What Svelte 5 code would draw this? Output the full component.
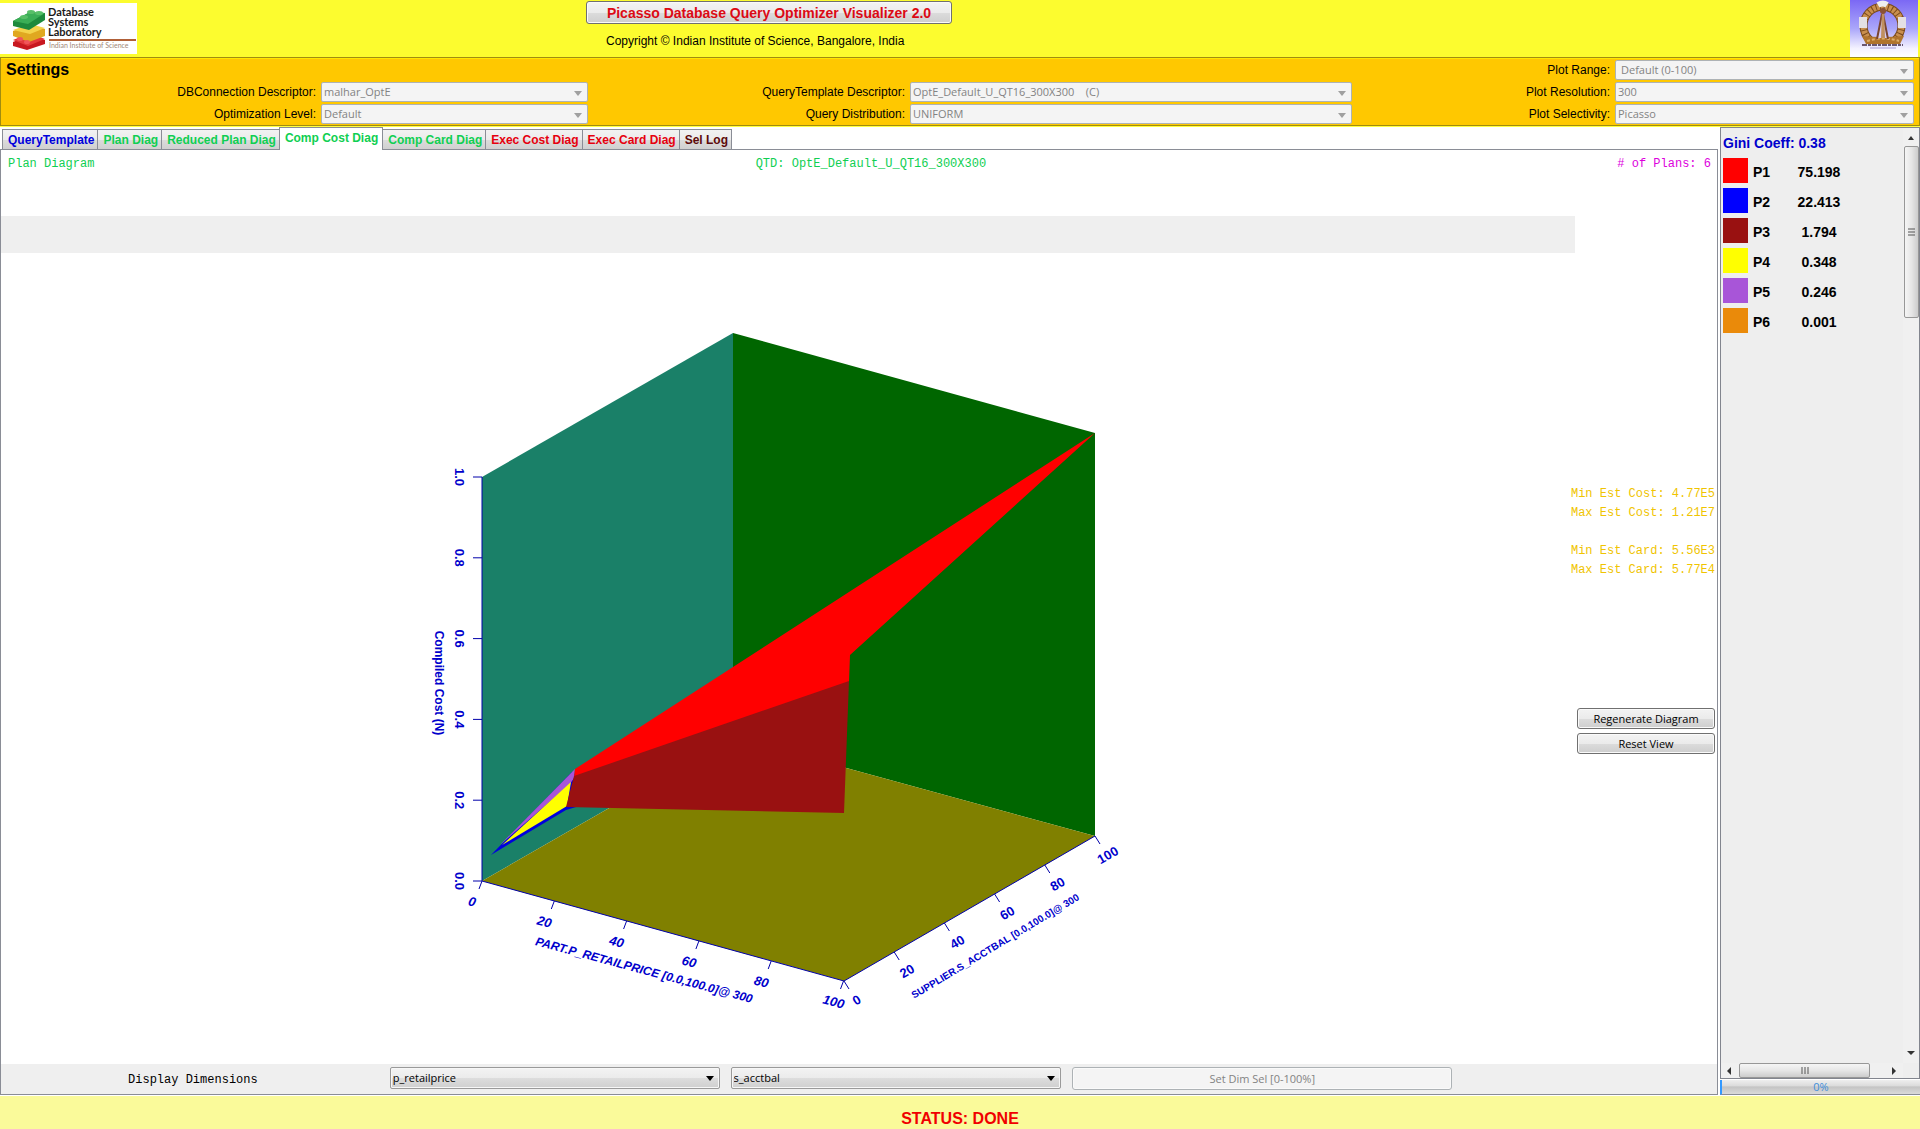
<script lang="ts">
	let dimX = 'p_retailprice';
	let dimY = 's_acctbal';
	let activeTab = 'Comp Cost Diag';

	const tabs = [
		{ name: 'QueryTemplate', color: '#0000dd' },
		{ name: 'Plan Diag', color: '#10cf52' },
		{ name: 'Reduced Plan Diag', color: '#10cf52' },
		{ name: 'Comp Cost Diag', color: '#10cf52' },
		{ name: 'Comp Card Diag', color: '#10cf52' },
		{ name: 'Exec Cost Diag', color: '#e6000e' },
		{ name: 'Exec Card Diag', color: '#e6000e' },
		{ name: 'Sel Log', color: '#5c0a0a' }
	];

	// listed row by row, three fields to a row
	const settings = [
		{ id: 'connection', label: 'DBConnection Descriptor:', value: 'malhar_OptE' },
		{
			id: 'template',
			label: 'QueryTemplate Descriptor:',
			value: 'OptE_Default_U_QT16_300X300\u00a0\u00a0\u00a0\u00a0(C)'
		},
		{ id: 'resolution', label: 'Plot Resolution:', value: '300' },
		{ id: 'level', label: 'Optimization Level:', value: 'Default' },
		{ id: 'distribution', label: 'Query Distribution:', value: 'UNIFORM' },
		{ id: 'selectivity', label: 'Plot Selectivity:', value: 'Picasso' }
	];

	const plans = [
		{ name: 'P1', share: '75.198', color: '#ff0000' },
		{ name: 'P2', share: '22.413', color: '#0000ff' },
		{ name: 'P3', share: '1.794', color: '#991111' },
		{ name: 'P4', share: '0.348', color: '#ffff00' },
		{ name: 'P5', share: '0.246', color: '#a855d8' },
		{ name: 'P6', share: '0.001', color: '#ea8a0a' }
	];

	const steps = [0, 1, 2, 3, 4, 5];

	const costTicks = steps.map((i) => ({ text: (i / 5).toFixed(1), x: 482, y: 881 - i * 80.8 }));
	const priceTicks = steps.map((i) => ({ text: String(i * 20), x: 482 + i * 72.3, y: 881 + i * 20 }));
	const acctTicks = steps.map((i) => ({ text: String(i * 20), x: 844 + i * 50.2, y: 981 - i * 29 }));
</script>

{#snippet arrow()}
	<svg class="arrow" width="8" height="5" viewBox="0 0 8 5" aria-hidden="true">
		<path d="M0 0h8L4 5z" fill="currentColor" />
	</svg>
{/snippet}

<div class="page">
	<header class="banner">
		<svg class="lab-logo" width="137" height="51" viewBox="0 3 137 51">
			<rect y="3" width="137" height="51" fill="#fff" />
			<path d="M13 42l17-7 15 5v4L27 50 13 46z" fill="#c81820" />
			<path d="M13 40l17-7 15 6-17 7z" fill="#e43a3c" />
			<path d="M13 31l17-6 15 4v7l-16 6-16-6z" fill="#e0a820" />
			<path d="M13 30l17-6 15 4-15 6z" fill="#f4d34a" />
			<path d="M13 21l17-9 15 1v7L29 30l-16-4z" fill="#1d8a3c" />
			<path d="M13 21l17-9 15 1-17 11z" fill="#3aae56" />
			<g fill="#58bf68">
				<ellipse cx="31" cy="12" rx="4" ry="2" />
				<ellipse cx="39" cy="13" rx="4" ry="2" />
				<ellipse cx="24" cy="17" rx="4" ry="2" />
			</g>
			<g fill="#f0555a">
				<ellipse cx="20" cy="39" rx="3" ry="2" />
				<ellipse cx="27" cy="42" rx="3" ry="2" />
			</g>
			<g font-family="Lato, sans-serif" font-size="11" font-weight="700" fill="#1a1a1a">
				<text x="48" y="16">Database</text>
				<text x="48" y="26">Systems</text>
				<text x="48" y="36">Laboratory</text>
			</g>
			<path d="M49 40h87" stroke="#b06038" stroke-width="2" />
			<text x="49" y="48" font-family="Lato, sans-serif" font-size="7" fill="#a08878">Indian Institute of Science</text>
		</svg>

		<div class="title">
			<button class="button title-button">Picasso Database Query Optimizer Visualizer 2.0</button>
			<p class="copyright">Copyright © Indian Institute of Science, Bangalore, India</p>
		</div>

		<svg class="crest" width="68" height="57" viewBox="0 0 68 57">
			<defs>
				<linearGradient id="sky" x1="0" y1="0" x2="0" y2="1">
					<stop offset="0" stop-color="#7b68f4" />
					<stop offset="0.5" stop-color="#aaa6fa" />
					<stop offset="0.85" stop-color="#f4f2ff" />
					<stop offset="1" stop-color="#fff" />
				</linearGradient>
			</defs>
			<rect width="68" height="57" fill="url(#sky)" />
			<path d="M20 40A19 19 0 1 1 45 40" fill="none" stroke="#7a4a1c" stroke-width="8" />
			<path d="M20 40A19 19 0 1 1 45 40" fill="none" stroke="#c98f4e" stroke-width="6" stroke-dasharray="3 1" />
			<path d="M28 5q5-3 9 0" fill="none" stroke="#eee" stroke-width="6" />
			<path d="M13 17v11M52 17v11" stroke="#e4e0e4" stroke-width="8" />
			<path d="M12 36q20 2 42 0l-4 8H16z" fill="#b0742c" />
			<path d="M17 41q16-5 32 0" fill="none" stroke="#dcae68" stroke-width="2" stroke-dasharray="3 2" />
			<path d="M32 14l-5 24h11l-5-24z" fill="#d8ccf0" />
			<path d="M32 14l-5 25M33 14l5 25" stroke="#7a4630" stroke-width="2" />
			<path d="M32 9h2l1 29h-4z" fill="#c09060" />
			<circle cx="33" cy="11" r="3" fill="#8a5236" />
			<path d="M12 45h41" stroke="#6b5870" stroke-width="2" stroke-dasharray="5 1 3 1" />
			<path d="M20 48h26" stroke="#a59ad8" />
		</svg>
	</header>

	<section class="settings">
		<h1>Settings</h1>
		<label class="range-label" for="range">Plot Range:</label>
		<div class="combo">
			<select id="range" class="indented" disabled><option>Default (0-100)</option></select>
			{@render arrow()}
		</div>
		{#each settings as field}
			<label for={field.id}>{field.label}</label>
			<div class="combo">
				<select id={field.id} disabled><option>{field.value}</option></select>
				{@render arrow()}
			</div>
		{/each}
	</section>

	<main>
		<div class="workspace">
			<div class="tabs" role="tablist">
				{#each tabs as tab}
					<button
						role="tab"
						class="tab"
						class:active={tab.name === activeTab}
						aria-selected={tab.name === activeTab}
						style="color: {tab.color}"
						on:click={() => (activeTab = tab.name)}
					>
						{tab.name}
					</button>
				{/each}
			</div>

			<div class="panel">
				<div class="captions">
					<span>Plan Diagram</span>
					<span class="qtd">QTD: OptE_Default_U_QT16_300X300</span>
					<span class="count"># of Plans: 6</span>
				</div>

				<div class="diagram">
					<div class="plot">
						<div class="strip"></div>
						<svg class="chart" viewBox="1 253 1574 811">
							<polygon points="482,477 733,333 733,737 482,881" fill="#1a8068" />
							<polygon points="733,333 1095,433 1095,836 733,737" fill="#006600" />
							<polygon points="482,881 733,737 1095,836 844,981" fill="#808000" />

							<polygon points="491,855 572,772 576,775 576,807 566,810" fill="#0000dd" />
							<polygon points="500,845 575,769 574,778 570,784" fill="#a855d8" />
							<polygon points="502,845 571,782 567,806" fill="#ffff00" />
							<polygon points="575,769 1095,433 850,655 849,682 574,777" fill="#ff0000" />
							<polygon points="574,776 849,681 844,813 566,807" fill="#991111" />

							<path class="axis" d="M482 477V881L844 981L1095 836" />

							<g class="ticks">
								{#each costTicks as t}
									<path d="M{t.x} {t.y}h-9" />
									<text transform="translate({t.x - 27} {t.y}) rotate(90)">{t.text}</text>
								{/each}
								{#each priceTicks as t}
									<path d="M{t.x} {t.y}l-3 8" />
									<text class="slanted" transform="translate({t.x - 11} {t.y + 25}) rotate(15)">{t.text}</text>
								{/each}
								{#each acctTicks as t}
									<path d="M{t.x} {t.y}l5 8" />
									<text transform="translate({t.x + 15} {t.y + 23}) rotate(-30)">{t.text}</text>
								{/each}
							</g>

							<g class="names">
								<text transform="translate(435 683) rotate(90)">Compiled Cost (N)</text>
								<text class="slanted" transform="translate(643 974) rotate(15)">PART.P_RETAILPRICE [0.0,100.0]@ 300</text>
								<text class="small" transform="translate(997 949) rotate(-31)">SUPPLIER.S_ACCTBAL [0.0,100.0]@ 300</text>
							</g>
						</svg>
					</div>

					<aside class="info">
						<div class="estimates">
							<p>Min Est Cost: 4.77E5</p>
							<p>Max Est Cost: 1.21E7</p>
							<p class="gap-above">Min Est Card: 5.56E3</p>
							<p>Max Est Card: 5.77E4</p>
						</div>
						<button class="button">Regenerate Diagram</button>
						<button class="button">Reset View</button>
					</aside>
				</div>

				<div class="dimensions">
					<span class="dim-title">Display Dimensions</span>
					<div class="combo enabled">
						<select aria-label="First dimension" bind:value={dimX}>
							<option>p_retailprice</option>
						</select>
						{@render arrow()}
					</div>
					<div class="combo enabled">
						<select aria-label="Second dimension" bind:value={dimY}>
							<option>s_acctbal</option>
						</select>
						{@render arrow()}
					</div>
					<button class="button" disabled>Set Dim Sel [0-100%]</button>
				</div>
			</div>
		</div>

		<div class="side">
			<div class="legend">
				<div class="legend-content">
					<h2>Gini Coeff: 0.38</h2>
					<ul>
						{#each plans as plan}
							<li>
								<span class="swatch" style="background: {plan.color}"></span>
								<span class="plan-name">{plan.name}</span>
								<span class="share">{plan.share}</span>
							</li>
						{/each}
					</ul>
				</div>
				<div class="scroll vertical">
					<svg width="6" height="4" viewBox="0 0 6 4"><path d="M0 4h6L3 0z" fill="#333" /></svg>
					<div class="thumb">
						<svg width="7" height="8" viewBox="0 0 7 8"><path d="M0 1h7M0 4h7M0 7h7" stroke="#555" /></svg>
					</div>
					<svg class="last" width="8" height="4" viewBox="0 0 8 4"><path d="M0 0h8L4 4z" fill="#333" /></svg>
				</div>
				<div class="scroll horizontal">
					<svg width="4" height="8" viewBox="0 0 4 8"><path d="M4 0v8L0 4z" fill="#333" /></svg>
					<div class="thumb">
						<svg width="8" height="7" viewBox="0 0 8 7"><path d="M1 0v7M4 0v7M7 0v7" stroke="#555" /></svg>
					</div>
					<svg class="last" width="4" height="8" viewBox="0 0 4 8"><path d="M0 0v8L4 4z" fill="#333" /></svg>
				</div>
			</div>
			<div class="progress" role="progressbar" aria-label="Progress" aria-valuenow="0">0%</div>
		</div>
	</main>

	<footer>STATUS: DONE</footer>
</div>

<style>
	:global(body) {
		margin: 0;
	}

	.page {
		display: flex;
		flex-direction: column;
		min-height: 100vh;
		font-family: 'Liberation Sans', Arial, sans-serif;
		font-size: 12px;
		color: #000;
		background: #fff;
	}

	h1,
	h2,
	p,
	ul {
		margin: 0;
		padding: 0;
		list-style: none;
	}

	.banner {
		display: grid;
		grid-template-columns: 586fr 366fr 968fr;
		height: 57px;
		background: #fcfc2f;
	}

	.lab-logo {
		display: block;
		margin-top: 3px;
	}

	.title {
		display: flex;
		flex-direction: column;
		padding-top: 1px;
	}

	.copyright {
		padding: 9px 0 0 20px;
		line-height: 16px;
		white-space: nowrap;
	}

	.crest {
		display: block;
		justify-self: end;
		margin-right: 2px;
	}

	.button {
		height: 21px;
		padding: 0;
		border: 1px solid #707070;
		border-radius: 3px;
		background: linear-gradient(#f3f3f3, #ebebeb 50%, #dcdcdc 51%, #cecece);
		box-shadow: inset 0 0 0 1px #fafafa;
		color: #000;
		font-family: 'Open Sans', sans-serif;
		font-size: 11px;
		line-height: 16px;
		white-space: nowrap;
	}

	.button:disabled {
		border-color: #adb2b5;
		background: #f4f4f4;
		color: #838383;
	}

	.title-button {
		height: 23px;
		color: #dc0a14;
		font-family: 'Liberation Sans', Arial, sans-serif;
		font-size: 14px;
		font-weight: bold;
	}

	.settings {
		display: grid;
		grid-template-columns: 315fr 267fr 312fr 442fr 253fr 299fr;
		grid-auto-rows: 20px;
		gap: 2px 5px;
		padding: 2px 5px 1px 0;
		border: 1px solid #a08c10;
		background: #ffc800;
		box-shadow: inset 0 1px #ffe600;
	}

	.settings h1 {
		grid-column: 1 / 5;
		padding-left: 5px;
		font-size: 16px;
		line-height: 20px;
	}

	.settings label {
		line-height: 20px;
		text-align: right;
		white-space: nowrap;
	}

	.combo {
		position: relative;
		min-width: 0;
		color: #a0a0a0;
	}

	.combo select {
		display: block;
		box-sizing: border-box;
		width: 100%;
		height: 20px;
		padding: 0 20px 0 2px;
		border: 1px solid #adb2b5;
		border-radius: 2px;
		background: #f4f4f4;
		color: #838383;
		opacity: 1;
		font-family: 'Open Sans', sans-serif;
		font-size: 11px;
		line-height: 16px;
		appearance: none;
	}

	.combo select.indented {
		padding-left: 5px;
	}

	.arrow {
		position: absolute;
		top: 9px;
		right: 6px;
		pointer-events: none;
	}

	.combo.enabled {
		color: #000;
	}

	.combo.enabled select {
		height: 22px;
		border-color: #9a9a9a;
		background: linear-gradient(#f3f3f3, #ebebeb 50%, #dddddd 51%, #cfcfcf);
		box-shadow: inset 0 0 0 1px #f7f7f7;
		color: #000;
	}

	main {
		display: grid;
		flex: 1;
		grid-template-columns: minmax(0, 1fr) 200px;
		gap: 2px;
		border-top: 1px solid #ffff40;
		border-bottom: 1px solid #fff;
	}

	.workspace {
		display: flex;
		flex-direction: column;
	}

	.tabs {
		display: flex;
		align-items: flex-end;
		height: 22px;
		padding-left: 2px;
	}

	.tab {
		height: 20px;
		padding: 2px 3px 0 5px;
		border: 1px solid #8a8d96;
		border-left-width: 0;
		border-bottom: 0;
		background: linear-gradient(#f2f2f2, #ebebeb 50%, #dcdcdc 51%, #d0d0d0);
		font-family: inherit;
		font-size: 12px;
		font-weight: bold;
		line-height: 17px;
		white-space: nowrap;
	}

	.tab:first-child {
		border-left-width: 1px;
	}

	.tab.active {
		z-index: 1;
		height: 23px;
		margin: 0 0 -1px -1px;
		padding: 0 4px 2px 5px;
		border-left-width: 1px;
		background: #fff;
	}

	.panel {
		display: flex;
		flex: 1;
		flex-direction: column;
		border: 1px solid #8a8d96;
	}

	.captions {
		display: flex;
		justify-content: space-between;
		height: 59px;
		padding: 7px 6px 0 7px;
		color: #10cf52;
		font-family: 'Liberation Mono', 'Courier New', monospace;
		line-height: 15px;
	}

	.qtd {
		padding-left: 30px;
	}

	.count {
		color: #dd00dd;
	}

	.diagram {
		display: grid;
		flex: 1;
		grid-template-columns: minmax(0, 1fr) 142px;
	}

	.strip {
		height: 37px;
		background: #efefef;
	}

	.chart {
		display: block;
		width: 100%;
	}

	.chart text {
		fill: #0000cc;
		font-family: 'Liberation Sans', Arial, sans-serif;
		font-size: 13px;
		font-weight: bold;
		text-anchor: middle;
	}

	.axis,
	.ticks path {
		fill: none;
		stroke: #0000aa;
	}

	.names text {
		font-size: 12px;
	}

	.chart .slanted {
		font-style: italic;
	}

	.names .small {
		font-size: 10px;
	}

	.info {
		display: flex;
		flex-direction: column;
		gap: 4px;
		padding: 269px 2px 0;
	}

	.estimates {
		align-self: flex-end;
		margin-bottom: 124px;
		color: #f0c400;
		font-family: 'Liberation Mono', 'Courier New', monospace;
		line-height: 19px;
		white-space: nowrap;
	}

	.gap-above {
		margin-top: 19px;
	}

	.dimensions {
		display: grid;
		grid-template-columns: 378fr 330fr 331fr 380fr 254fr;
		gap: 11px;
		height: 27px;
		padding-top: 3px;
		background: #efefef;
	}

	.dim-title {
		justify-self: center;
		padding-left: 6px;
		font-family: 'Liberation Mono', 'Courier New', monospace;
		line-height: 26px;
	}

	.dimensions .button {
		height: 23px;
	}

	.side {
		display: flex;
		flex-direction: column;
		gap: 1px;
	}

	.legend {
		display: grid;
		flex: 1;
		grid-template-columns: 1fr 16px;
		grid-template-rows: 1fr 15px;
		border: 1px solid #82858e;
		background: #eeeeee;
	}

	.legend-content {
		padding: 6px 0 0 2px;
	}

	.legend h2 {
		color: #0000cc;
		font-size: 14px;
		line-height: 19px;
	}

	.legend li {
		display: flex;
		gap: 5px;
		height: 25px;
		margin: 5px 0;
		font-size: 14px;
		font-weight: bold;
		line-height: 29px;
	}

	.swatch {
		width: 25px;
	}

	.plan-name {
		width: 36px;
	}

	.share {
		width: 50px;
		text-align: center;
	}

	.scroll {
		display: flex;
		align-items: center;
		background: #f0f0f0;
	}

	.vertical {
		flex-direction: column;
		padding: 8px 0 8px;
	}

	.horizontal {
		padding: 0 7px 0 6px;
	}

	.thumb {
		display: flex;
		box-sizing: border-box;
		align-items: center;
		justify-content: center;
		border: 1px solid #979797;
		border-radius: 2px;
	}

	.vertical .thumb {
		width: 15px;
		height: 172px;
		margin-top: 6px;
		background: linear-gradient(90deg, #f5f5f5, #e6e6e6 50%, #cccccc);
	}

	.horizontal .thumb {
		width: 131px;
		height: 15px;
		margin-left: 8px;
		background: linear-gradient(#f5f5f5, #e6e6e6 50%, #cccccc);
	}

	.vertical .last {
		margin-top: auto;
	}

	.horizontal .last {
		margin-left: auto;
	}

	.progress {
		height: 14px;
		border-bottom: 1px solid #8a8d96;
		border-left: 2px solid #3399ff;
		background: linear-gradient(#eeeeee, #dcdcdc 40%, #c4c4c4 50%, #dadada);
		color: #3d8edb;
		font-family: 'Open Sans', sans-serif;
		font-size: 11px;
		line-height: 14px;
		text-align: center;
	}

	footer {
		height: 33px;
		background: #fafa9a;
		color: #f00000;
		font-size: 16px;
		font-weight: bold;
		line-height: 45px;
		text-align: center;
	}
</style>
